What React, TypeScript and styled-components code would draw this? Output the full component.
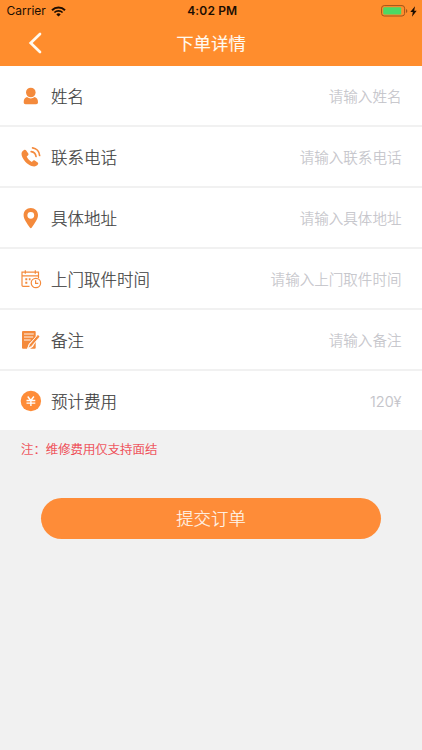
import React from 'react';
import styled, { createGlobalStyle } from 'styled-components';

const orange = '#fe8c38';
const iconOrange = '#f48a3c';

const GlobalStyle = createGlobalStyle`
  * { box-sizing: border-box; }
  body { margin: 0; background: #f1f1f1; font-family: Inter, "Noto Sans CJK SC", sans-serif; }
  button, input { font: inherit; border: 0; padding: 0; margin: 0; }
`;

const Screen = styled.main`
  display: flex;
  flex-direction: column;
  min-height: 750px;
  background: #f1f1f1;
`;

const Header = styled.header`
  height: 66px;
  background: #ff8d2d;
`;

const StatusBar = styled.div`
  display: grid;
  grid-template-columns: 1fr auto 1fr;
  align-items: center;
  height: 22px;
  padding: 0 5px 0 6.5px;
  color: #1c0d02;
  font-size: 12px;
  line-height: 22px;
`;

const Carrier = styled.div`
  display: flex;
  align-items: center;
  gap: 5px;
`;

const Clock = styled.div`
  padding-left: 1px;
  font-weight: 600;
  letter-spacing: 0.15px;
`;

const Power = styled.div`
  display: flex;
  align-items: center;
  justify-content: flex-end;
  gap: 2px;
`;

const NavBar = styled.div`
  display: grid;
  grid-template-columns: 70px 1fr 70px;
  align-items: center;
  height: 42px;
`;

const BackButton = styled.button`
  display: flex;
  align-items: center;
  height: 42px;
  padding-left: 28px;
  background: none;
`;

const Title = styled.h1`
  margin: 0;
  color: #fffaf0;
  font-family: "Noto Sans CJK SC", sans-serif;
  font-size: 17.4px;
  font-weight: 400;
  line-height: 42px;
  text-align: center;
  -webkit-text-stroke: 0.1px #fffaf0;
`;

const Form = styled.form`
  display: flex;
  flex-direction: column;
`;

const Fields = styled.div`
  display: flex;
  flex-direction: column;
  gap: 2px;
`;

const Row = styled.label`
  display: flex;
  align-items: center;
  height: 59px;
  padding: 1px 20.5px 0 20px;
  background: #fff;
`;

const IconSlot = styled.span`
  display: flex;
  justify-content: center;
  width: 22px;
  margin-right: 9px;
`;

const Label = styled.span`
  flex: none;
  padding-top: 2px;
  color: #3e3e3e;
  font-size: 16.5px;
  font-weight: 300;
  line-height: 24px;
  -webkit-text-stroke: 0.2px #3e3e3e;
`;

const Field = styled.input`
  flex: 1;
  min-width: 0;
  height: 30px;
  && { padding-top: 2px; }
  background: none;
  color: #c7c7cb;
  font-size: 14.55px;
  font-weight: 300;
  text-align: right;
  outline: none;
  -webkit-text-stroke: 0.15px #c3c3c9;
  &::placeholder { color: #c3c3c9; opacity: 1; }
`;

const Note = styled.p`
  margin: 10px 0 0 21px;
  color: #ef3c48;
  font-size: 12.4px;
  font-weight: 300;
  line-height: 20px;
  -webkit-text-stroke: 0.2px #ef3c48;
`;

const Submit = styled.button`
  height: 41px;
  margin: 38px 41px 0;
  border-radius: 21px;
  background: ${orange};
  color: #fff8ef;
  -webkit-text-stroke: 0.15px #fff8ef;
  && {
    padding-top: 1px;
    font-size: 17.4px;
    font-weight: 300;
    line-height: 40px;
  }
`;

const WifiIcon = () => (
  <svg width="15" height="11" viewBox="0 0 15 11" fill="none" stroke="#1c0d02">
    <path d="M1 4.2a9.3 9.3 0 0 1 13 0" strokeWidth="2" />
    <path d="M3.4 6.5a5.9 5.9 0 0 1 8.2 0" strokeWidth="1.7" />
    <path d="M7.5 10.6 5.3 8.4a3.1 3.1 0 0 1 4.4 0Z" fill="#1c0d02" stroke="none" />
  </svg>
);

const BatteryIcon = () => (
  <svg width="27" height="12" viewBox="0 0 27 12">
    <rect x=".6" y=".6" width="23" height="10.4" rx="2.6" fill="none" stroke="#a2551a" strokeWidth="1" />
    <rect x="2.2" y="2.2" width="18" height="7.2" rx="1" fill="#4cd964" />
    <path d="M25 4v4c1.8-.6 1.8-3.4 0-4Z" fill="#a2551a" />
  </svg>
);

const BoltIcon = () => (
  <svg width="7" height="11" viewBox="0 0 7 11">
    <path d="M5 .2.3 6h2.5L2 10.7l4.7-6H4.2Z" fill="#1c0d02" />
  </svg>
);

const BackIcon = () => (
  <svg width="14" height="22" viewBox="0 0 14 22">
    <path d="M12 2 2.7 11 12 20" fill="none" stroke="#fffaf0" strokeWidth="2.7" strokeLinecap="round" />
  </svg>
);

const PersonIcon = () => (
  <svg width="22" height="22" viewBox="0 0 22 22" fill={iconOrange}>
    <circle cx="10.8" cy="7.5" r="4.8" />
    <path d="M7 12.1c2.3 1.7 5.3 1.7 7.600 0 2.300.6 3.400 2.300 3.400 5.200 0 1.300-.7 1.900-1.900 1.900H5.600c-1.200 0-1.900-.6-1.900-1.900 0-2.900 1.100-4.600 3.300-5.200Z" />
  </svg>
);

const PhoneIcon = () => (
  <svg width="22" height="22" viewBox="0 0 22 22">
    <path
      d="M4.100 4C1.900 4.900 1 7.100 1.800 9.700c1.600 4.700 5.200 8.600 9.700 10.200 2.800 1 5.200.5 6.500-1.600.4-.7.300-1.300-.3-1.800l-2.900-2c-.7-.5-1.400-.4-1.900.2l-1 1.300c-2.100-1-4.200-3.200-5.200-5.500l1.200-1c.6-.5.800-1.200.4-1.900L6.200 4.600c-.5-.8-1.200-1-2.100-.6Z"
      fill={iconOrange}
    />
    <path d="M12.600 1.900c3.800.5 6.700 3.700 7 7.600M11.200 5.600c2.700.3 4.500 2.200 4.800 4.900" fill="none" stroke={iconOrange} strokeWidth="1.700" strokeLinecap="round" />
  </svg>
);

const PinIcon = () => (
  <svg width="22" height="22" viewBox="0 0 22 22">
    <path d="M10.800 1c-4.100 0-7.200 3.100-7.200 7.100 0 4.400 3.500 8.300 6.200 12.500.6.900 1.400.9 2 0C14.500 16.400 18 12.500 18 8.100 18 4.100 14.900 1 10.800 1Zm0 3.900a3.400 3.400 0 1 1 0 6.800 3.400 3.400 0 0 1 0-6.800Z" fill={iconOrange} fillRule="evenodd" />
  </svg>
);

const ScheduleIcon = () => (
  <svg width="22" height="22" viewBox="0 -0.7 22 22" fill="none" stroke={iconOrange} strokeWidth="1.200">
    <path d="M9.500 17.600H3a1 1 0 0 1-1-1V3.500h16.500v6M2 7.200h16.500M5.300 1.500v3.500M15.300 1.500v3.500" />
    <path d="M5.300 10.600h2M8.800 10.600h1.700M5.300 14h2" strokeWidth="1.900" />
    <circle cx="15.900" cy="14.300" r="4.700" />
    <path d="M15.600 11.600v3h2.700" />
  </svg>
);

const MemoIcon = () => (
  <svg width="22" height="22" viewBox="0 -0.7 22 22">
    <path d="M2 2.200q0-1 1-1h11.700q1 0 1 1v5L8.800 14.400 7 19H3q-1 0-1-1Z" fill={iconOrange} />
    <path d="M15.700 12v6q0 1-1 1H10l3-1.900Z" fill={iconOrange} />
    <path d="M4 4.300h9.800M4 7.300h9.200M4 10.300h6.600" stroke="#fff" strokeWidth=".9" />
    <path d="m16.900 6 2.300 1.700-7.700 9-3.500 2 1.400-3.900Z" fill={iconOrange} stroke="#fff" strokeWidth=".8" />
    <path d="m17.300 6 1.700 1.300" stroke={iconOrange} strokeWidth="1.600" />
  </svg>
);

const YuanIcon = () => (
  <svg width="22" height="22" viewBox="0 -0.5 22 22">
    <circle cx="10.900" cy="10.500" r="10.200" fill={orange} />
    <path d="m7.700 6 3.100 4 3.100-4M6.500 10h8.800M6.500 12.600h8.800M10.900 9.600v6" fill="none" stroke="#fff" strokeWidth="1.400" />
  </svg>
);

const fields = [
  { label: '姓名', hint: '请输入姓名', Icon: PersonIcon },
  { label: '联系电话', hint: '请输入联系电话', Icon: PhoneIcon },
  { label: '具体地址', hint: '请输入具体地址', Icon: PinIcon },
  { label: '上门取件时间', hint: '请输入上门取件时间', Icon: ScheduleIcon },
  { label: '备注', hint: '请输入备注', Icon: MemoIcon },
  { label: '预计费用', hint: '120¥', Icon: YuanIcon },
];

export default function App() {
  return (
    <Screen>
      <GlobalStyle />
      <Header>
        <StatusBar>
          <Carrier>Carrier <WifiIcon /></Carrier>
          <Clock>4:02 PM</Clock>
          <Power><BatteryIcon /><BoltIcon /></Power>
        </StatusBar>
        <NavBar>
          <BackButton type="button" aria-label="返回"><BackIcon /></BackButton>
          <Title>下单详情</Title>
        </NavBar>
      </Header>
      <Form>
        <Fields>
          {fields.map(({ label, hint, Icon }) => (
            <Row key={label}>
              <IconSlot><Icon /></IconSlot>
              <Label>{label}</Label>
              <Field placeholder={hint} />
            </Row>
          ))}
        </Fields>
        <Note>注：维修费用仅支持面结</Note>
        <Submit type="button">提交订单</Submit>
      </Form>
    </Screen>
  );
}
